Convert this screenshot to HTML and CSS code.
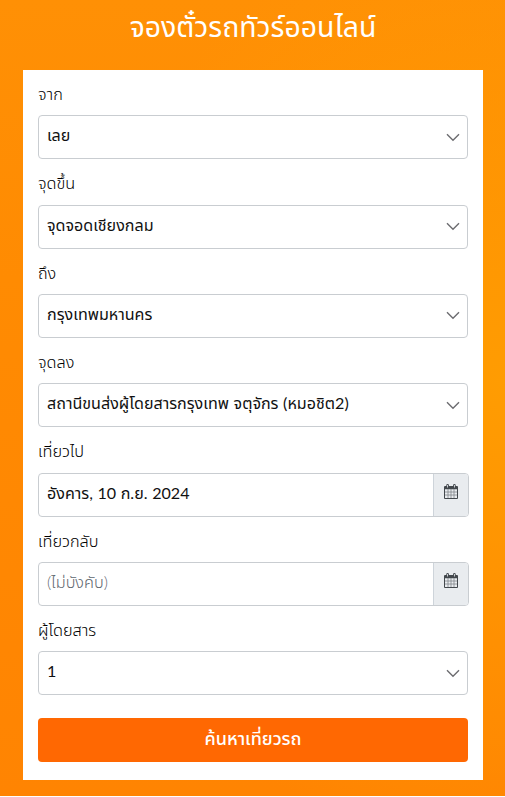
FILE: index.html
```html
<!DOCTYPE html>
<html lang="th">
  <head>
    <meta charset="UTF-8" />
    <meta name="viewport" content="width=device-width, initial-scale=1.0" />
    <title>จองตั๋วรถทัวร์ออนไลน์</title>
    <link rel="stylesheet" href="styles.css">
  </head>
  <body>
    <svg class="sprite" width="0" height="0">
      <symbol id="calendar" viewBox="0 0 14 15">
        <path fill="#43484d" fill-rule="evenodd" d="M0 3q0-1 1-1h1.300V1.200Q2.300 0 3.600 0T4.900 1.200V2h4.200V1.200Q9.100 0 10.400 0t1.300 1.200V2H13q1 0 1 1v11q0 1-1 1H1q-1 0-1-1zM1 5.200v8.800h12V5.200zM3.200 1v2.400h.8V1zM10 1v2.400h.8V1z" />
        <path fill="none" stroke="#82858c" stroke-width="0.8" d="M1 8h12M1 11h12M4 5v9M7 5v9M10 5v9" />
      </symbol>
      <symbol id="chevron" viewBox="0 0 14 9">
        <path fill="none" stroke="#6c6c70" stroke-width="1.4" d="M1 1.200l6 6 6-6" />
      </symbol>
    </svg>

    <h1 class="title">จองตั๋วรถทัวร์ออนไลน์</h1>
    <form class="search-form">
      <div class="field">
        <label>จาก</label>
        <div class="control"><span>เลย</span><svg class="chevron"><use href="#chevron" /></svg></div>
      </div>
      <div class="field">
        <label>จุดขึ้น</label>
        <div class="control"><span>จุดจอดเชียงกลม</span><svg class="chevron"><use href="#chevron" /></svg></div>
      </div>
      <div class="field">
        <label>ถึง</label>
        <div class="control"><span>กรุงเทพมหานคร</span><svg class="chevron"><use href="#chevron" /></svg></div>
      </div>
      <div class="field">
        <label>จุดลง</label>
        <div class="control"><span>สถานีขนส่งผู้โดยสารกรุงเทพ จตุจักร (หมอชิต2)</span><svg class="chevron"><use href="#chevron" /></svg></div>
      </div>
      <div class="field">
        <label>เที่ยวไป</label>
        <div class="control date"><span>อังคาร, 10 ก.ย. 2024</span><div class="addon"><svg class="calendar"><use href="#calendar" /></svg></div></div>
      </div>
      <div class="field">
        <label>เที่ยวกลับ</label>
        <div class="control date"><span class="placeholder">(ไม่บังคับ)</span><div class="addon"><svg class="calendar"><use href="#calendar" /></svg></div></div>
      </div>
      <div class="field">
        <label>ผู้โดยสาร</label>
        <div class="control"><span>1</span><svg class="chevron"><use href="#chevron" /></svg></div>
      </div>
      <button class="search-button" type="button">ค้นหาเที่ยวรถ</button>
    </form>
  </body>
</html>
```

FILE: styles.css
```css
* {
  box-sizing: border-box;
}
html {
  background: #fff;
}
body {
  margin: 0;
  height: 796px;
  padding: 0 22px 0 23px;
  background: radial-gradient(ellipse 420px 480px at 100% 48%, #ff9c02 0, rgba(255, 156, 2, 0) 100%),
    linear-gradient(180deg, #ff9005 0, #ff8b02 35%, #ff8402 100%);
  font-family: Lato, "Noto Sans Thai", sans-serif;
  font-size: 16px;
  line-height: 24px;
  color: #000;
}
.sprite {
  display: block;
}
.title {
  margin: 0;
  height: 70px;
  padding-top: 8px;
  font-size: 28.4px;
  font-weight: 400;
  line-height: 36px;
  text-align: center;
  color: #fff;
}
.search-form {
  height: 710px;
  padding: 15px;
  background: #fff;
}
.field {
  height: 89.33px;
}
.field label {
  display: block;
  height: 30.2px;
  font-size: 16.3px;
  font-weight: 350;
  line-height: 18px;
}
.control {
  display: flex;
  align-items: center;
  justify-content: space-between;
  height: 44px;
  padding: 0 7px 4px 8px;
  border: 1px solid #c9cdd1;
  border-radius: 4px;
  font-size: 16.1px;
  white-space: nowrap;
  word-spacing: 0.5px;
  color: #111;
}
.chevron {
  width: 14px;
  height: 9px;
  margin-top: 4px;
}
.date {
  align-items: stretch;
  width: 431px;
  padding: 0 0 0 8px;
  line-height: 38px;
}
.placeholder {
  font-size: 16.3px;
  font-weight: 350;
  color: #5f6870;
}
.addon {
  width: 35px;
  padding: 10px 0 0 10px;
  background: #e9ecef;
  border-left: 1px solid #ced4da;
  border-radius: 0 3px 3px 0;
  line-height: 0;
}
.calendar {
  width: 14px;
  height: 15px;
}
.search-button {
  display: block;
  width: 100%;
  height: 44px;
  margin-top: 7.500px;
  padding: 0 0 4px;
  border: 0;
  border-radius: 4px;
  background: #ff6802;
  font: inherit;
  font-size: 18px;
  font-weight: 500;
  color: #fff;
  cursor: pointer;
}
```
